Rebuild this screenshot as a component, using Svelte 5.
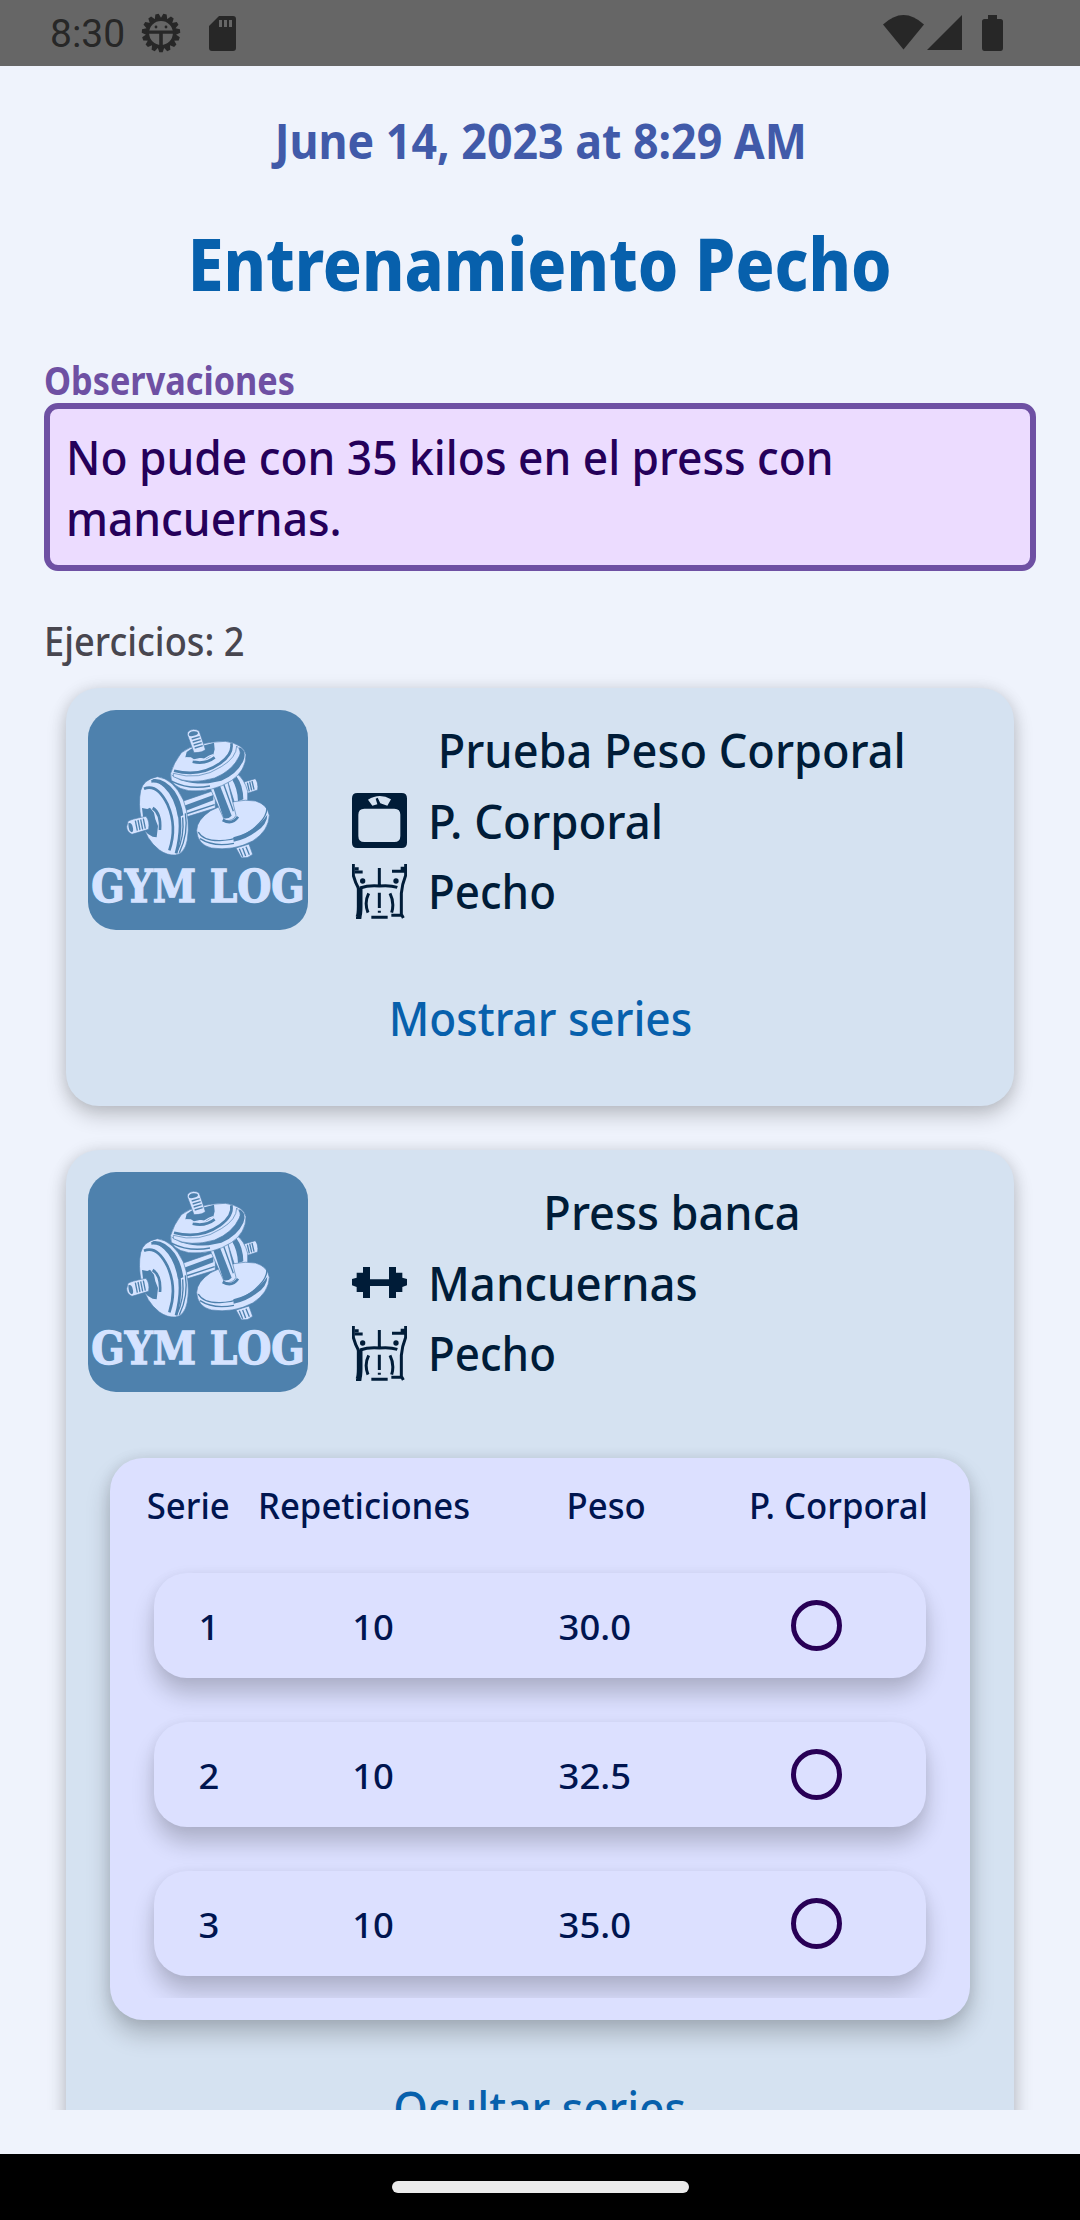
<script>
  const exercises = [
    { name: 'Prueba Peso Corporal', gear: 'P. Corporal', icon: 'scale', muscle: 'Pecho', action: 'Mostrar series', sets: [] },
    {
      name: 'Press banca',
      gear: 'Mancuernas',
      icon: 'dumbbell',
      muscle: 'Pecho',
      action: 'Ocultar series',
      sets: [
        { n: 1, reps: 10, weight: '30.0' },
        { n: 2, reps: 10, weight: '32.5' },
        { n: 3, reps: 10, weight: '35.0' }
      ]
    }
  ];
  const teeth = Array.from({ length: 15 }, (_, i) => 90 + i * 24);
</script>

{#snippet logo()}
  <svg class="logo" viewBox="0 0 660 660">
    <g transform="translate(96 30)">
      <!-- back dumbbell: bar and far end -->
      <path class="l" d="M372 186l34-10q10 12 7 34l-34 11z" />
      <path class="d thin" d="M382 188l6 26M389 185l6 26M396 183l6 26" />
      <path class="l" d="M322 180L350 160Q374 178 383 214V242L344 250Z" />
      <path class="df" d="M336 178l14-8q19 24 20 68l-16 6q-1-38-18-66z" />
      <path class="l" d="M184 245L286 210V264L196 292Z" />
      <path class="df" d="M192 257L280 225V241L198 272Z" />
      <path class="d thin" d="M198 282L284 254" />
      <!-- left plates -->
      <path class="l" d="M62 212Q70 178 112 170Q160 176 190 240Q212 300 202 360Q194 402 166 405Q142 407 118 390Q78 360 64 300Q54 250 62 212Z" />
      <path class="d" d="M72 206Q112 190 143 254Q172 320 148 391M94 184Q140 180 168 244Q192 312 168 400" />
      <path class="df" d="M96 178Q132 172 164 214Q184 244 190 286L174 292Q164 232 132 202Q114 186 96 178Z" />
      <path class="d thin" d="M196 280Q206 340 178 398M188 292Q194 350 170 398" />
      <path class="d" d="M98 264Q124 280 120 330" />
      <path class="df" d="M66 264l16 3 8-4 12 15 4 20 8 20-4 34-12-2-14-8-10-10z" />
      <path class="l" d="M24 304Q30 298 78 289Q90 304 86 328L36 343Q20 336 20 320Z" />
      <path class="df" d="M25 310q9-5 13 10t-3 17q-10-3-10-27z" />
      <path class="d thin" d="M46 302l6 30M54 300l6 30M62 298l6 30M70 296l6 30" />
      <!-- lower right plates and front bar -->
      <path class="l" d="M348 384l39-12 11 31q-14 14-34 10z" />
      <path class="d thin" d="M358 386l10 24M368 384l9 24M378 380l10 24" />
      <path class="l" d="M230 331Q230 300 272 272Q348 232 407 243Q443 254 448 286Q446 333 398 363Q340 394 274 384Q232 374 230 331Z" />
      <path class="d thin" d="M235 336Q249 363 300 362Q370 360 418 310Q440 288 441 264" />
      <path class="df" d="M340 352Q408 334 442 284Q442 312 410 334Q376 360 341 365Z" />
      <path class="d thin" d="M240 356Q280 382 342 370" />
      <path class="l" d="M270 204L322 180L348 286Q340 304 314 302Z" />
      <path class="df" d="M280 205l20-8 35 90q-8 10-24 8z" />
      <path class="d thin" d="M310 190L340 274" />
      <path class="d" d="M308 300Q336 316 354 290" />
      <!-- top plates -->
      <path class="l" d="M152 160Q160 130 184 98Q226 66 316 64Q370 72 378 104Q378 152 334 182Q278 218 206 212Q148 202 152 160Z" />
      <path class="d" d="M162 152Q240 172 300 130Q340 102 334 70" />
      <path class="df" d="M154 164Q240 196 310 148Q356 116 358 82Q382 92 370 122Q352 162 304 182L266 190Q188 194 154 164Z" />
      <path class="l" d="M160 160Q238 184 304 140Q350 112 350 78Q366 92 358 108Q338 152 284 174Q210 196 160 170Z" />
      <path class="d thin" d="M156 184Q208 210 270 198" />
      <path class="d" d="M218 125Q256 134 284 112" />
      <path class="df" d="M196 112l4-16 14-10 68-18 2 20-4 16-22 14-16-4-20 8-8-8z" />
      <path class="d thin wave" d="M198 114l14 0 10 6 18-4 12 2 16-10 12-4" />
      <path class="l" d="M202 44Q200 32 220 28Q238 28 240 40L256 88Q250 98 222 98Z" />
      <path class="df" d="M206 44q2-9 14-10 14-1 14 6-2 6-16 8-10 2-12-4z" />
      <path class="d thin" d="M215 57l24-7M218 66l24-7M221 75l24-7M224 84l24-7" />
    </g>
    <text x="10" y="577" textLength="640" lengthAdjust="spacingAndGlyphs">GYM LOG</text>
  </svg>
{/snippet}

{#snippet gearIcon(kind)}
  {#if kind === 'scale'}
    <svg class="ico" viewBox="0 0 165 165">
      <path fill-rule="evenodd" d="M16 0H149Q165 0 165 16V149Q165 165 149 165H16Q0 165 0 149V16Q0 0 16 0ZM37 47Q19 47 19 65V129Q19 147 37 147H127Q145 147 145 129V65Q145 47 127 47ZM48 20L61 38L76 34L71 17L77 14L85 31L106 38L117 19Q83-2 48 20Z" />
    </svg>
  {:else}
    <svg class="ico" viewBox="0 0 165 165">
      <path d="M0 72l14-4V53H33V36H54V73H111V36H132V53H151V68l14 4V91l-14 5V111H132V129H111V93H54V129H33V111H14V96L0 91Z" />
    </svg>
  {/if}
{/snippet}

{#snippet torso()}
  <svg class="ico line" viewBox="0 0 165 165">
    <path d="M4 0V34Q10 56 20 74" />
    <path class="w" d="M23 72V128Q23 150 19 160" />
    <path d="M161 0V34Q150 62 148 88V155M8 14H20M8 24H32M120 22H160M146 13H160M82 12V66M24 72Q50 63 82 66Q114 63 136 70M50 88Q36 116 48 146M114 88Q128 116 119 146M82 86V132M82 140V146M58 160H107M118 154H150L154 162M12 162H28" />
    <circle cx="32" cy="51" r="8" /><circle cx="132" cy="51" r="8" />
  </svg>
{/snippet}

<div class="screen">
  <header class="status">
    <span class="clock">8:30</span>
    <svg class="gear" width="40" height="40" viewBox="-20 -20 40 40">
      {#each teeth as a}
        <path d="M13 -3.8L19.2 -1.7V1.7L13 3.8Z" transform="rotate({a})" />
      {/each}
      <circle r="13.4" class="ring" />
      <path d="M-13 -2.4H13V.8H1.8V14H-1.8V.8H-13Z" />
      <circle cx="-5" cy="-6" r="1.4" /><circle cx="5" cy="-6" r="1.4" />
    </svg>
    <svg class="sd" width="27" height="35" viewBox="0 0 27 35">
      <path fill-rule="evenodd" d="M10 0H24Q27 0 27 3V32Q27 35 24 35H3Q0 35 0 32V10ZM10 4V11H13V4ZM15 4V11H18V4ZM20 4V11H23V4Z" />
    </svg>
    <svg class="wifi" width="41" height="35" viewBox="0 0 41 35"><path d="M0 9.5Q20.500-9.500 41 9.500L20.500 34.500Z" /></svg>
    <svg class="cell" width="35" height="35" viewBox="0 0 35 35"><path d="M35 0V35H0Z" /></svg>
    <svg class="battery" width="21" height="36" viewBox="0 0 21 36"><path d="M6 0H15V4H18.500Q21 4 21 6.500V33Q21 36 18.500 36H2.500Q0 36 0 33V6.500Q0 4 2.500 4H6Z" /></svg>
  </header>

  <main>
    <p class="date"><span>June 14, 2023 at 8:29 AM</span></p>
    <h1><span>Entrenamiento Pecho</span></h1>
    <h2><span>Observaciones</span></h2>
    <div class="note"><span>No pude con 35 kilos en el press con<br />mancuernas.</span></div>
    <p class="count"><span>Ejercicios: 2</span></p>

    <section class="list">
      {#each exercises as ex}
        <article class="card">
          <div class="head">
            {@render logo()}
            <div class="info">
              <div class="name"><span>{ex.name}</span></div>
              <div class="row">{@render gearIcon(ex.icon)}<span>{ex.gear}</span></div>
              <div class="row">{@render torso()}<span class="muscle">{ex.muscle}</span></div>
            </div>
          </div>
          {#if ex.sets.length}
            <div class="panel">
              <div class="cols">
                <span>Serie</span><span>Repeticiones</span><span>Peso</span><span>P. Corporal</span>
              </div>
              <div class="sets">
                {#each ex.sets as s}
                  <div class="set">
                    <span>{s.n}</span><span>{s.reps}</span><span>{s.weight}</span><i class="radio"></i>
                  </div>
                {/each}
              </div>
            </div>
          {/if}
          <div class="action"><span>{ex.action}</span></div>
        </article>
      {/each}
    </section>
  </main>

  <footer class="nav"><div class="pill"></div></footer>
</div>

<style>
  :global(body) { margin: 0; }
  .screen {
    width: 1080px; height: 2220px; overflow: hidden;
    display: flex; flex-direction: column;
    background: #eff3fc;
    font-family: 'Noto Sans', 'Open Sans', sans-serif; font-weight: 500;
  }
  p, h1, h2 { margin: 0; }
  span { display: inline-block; white-space: nowrap; }

  .status {
    height: 66px; flex: none; box-sizing: border-box; padding: 0 77px 0 50px;
    display: flex; align-items: flex-start; background: #666; color: #272727; fill: #272727;
  }
  .clock { width: 91px; font: 400 39px/66px Roboto, sans-serif; padding-top: 1px; }
  .gear { margin-top: 13px; }
  .ring { fill: none; stroke: #272727; stroke-width: 3; }
  .sd { margin: 16px 0 0 28px; }
  .wifi { margin: 15px 3px 0 auto; }
  .cell { margin: 15px 20px 0 0; }
  .battery { margin-top: 15px; }

  main { flex: 1; min-height: 0; padding: 44px 44px; box-sizing: border-box; display: flex; flex-direction: column; }
  .date { font-size: 49px; line-height: 60px; font-weight: 700; color: #415aa9; text-align: center; }
  .date span { transform: translateX(1px) scaleX(.912); }
  h1 { margin-top: 44px; font-size: 73px; line-height: 98px; font-weight: 800; color: #0760ac; text-align: center; }
  h1 span { margin: 0 -60px; transform: scaleX(.883); }
  h2 { margin-top: 45px; font-size: 39px; line-height: 46px; font-weight: 700; color: #6e50a3; }
  h2 span, .note span, .count span, .row span { transform-origin: left; }
  h2 span { transform: scaleX(.878); }
  .note {
    height: 168px; flex: none; box-sizing: border-box; padding: 18px 16px; border: 6px solid #6e50a3; border-radius: 14px;
    background: #ecdcff; color: #25005a; font-size: 47px; line-height: 61px;
  }
  .note span { transform: scaleX(.943); }
  .count { margin-top: 45px; font-size: 39px; line-height: 50px; color: #48464f; }
  .count span { transform: scaleX(.93); }

  .list {
    height: 1444px; flex: none; box-sizing: border-box; padding: 22px; overflow: hidden;
    display: flex; flex-direction: column; gap: 44px;
  }
  .card {
    flex: none; box-sizing: border-box; padding: 22px 22px 53px; border-radius: 33px;
    background: #d5e2f1; color: #001c38; font-size: 47px;
    box-shadow: 0 10px 20px rgba(0, 0, 0, .19), 0 0 16px rgba(0, 0, 0, .1);
  }
  .head { display: flex; gap: 44px; height: 220px; }
  .logo { width: 220px; height: 220px; flex: none; border-radius: 28px; background: #4e81ad; }
  .logo text { font: 700 135px 'DejaVu Serif', serif; fill: #d5e3ff; stroke: #d5e3ff; stroke-width: 4; }
  .l { fill: #d5e3ff; stroke: #4e81ad; stroke-width: 2; }
  .df { fill: #4e81ad; }
  .d { fill: none; stroke: #4e81ad; stroke-width: 8; }
  .thin { stroke-width: 4; }
  .wave { stroke: #d5e3ff; }
  .info { flex: 1; padding-top: 5px; line-height: 70px; }
  .name { height: 70.5px; text-align: center; }
  .name span { transform: scaleX(.96); }
  .row { height: 70.5px; display: flex; align-items: center; gap: 21px; }
  .row span { transform: scaleX(.97); }
  .row .muscle { transform: scaleX(.935); }
  .ico { width: 55px; height: 55px; fill: #001c38; }
  .line path { fill: none; stroke: #001c38; stroke-width: 9; stroke-linejoin: round; }
  .line path.w { stroke-width: 17; }
  .action { margin-top: 53px; line-height: 70px; text-align: center; color: #0760ac; }
  .action span { transform: scaleX(.94); }

  .panel {
    margin: 66px 22px 0; padding: 22px; border-radius: 33px; background: #dce0ff; color: #001550;
    box-shadow: 0 14px 24px rgba(0, 0, 0, .22), 0 0 14px rgba(0, 0, 0, .09);
  }
  .cols, .set { display: grid; justify-items: center; }
  .cols { grid-template-columns: 112px 240px 245px 219px; font-size: 37px; line-height: 50px; }
  .cols span { transform: scaleX(.938); }
  .sets { padding: 43px 22px 22px; overflow: hidden; display: flex; flex-direction: column; gap: 44px; }
  .set {
    height: 105px; grid-template-columns: 110px 219px 224px 218px; align-items: center;
    border-radius: 33px; background: #dce0ff; font-size: 35px; line-height: 50px;
    box-shadow: 0 16px 22px rgba(0, 0, 0, .2), 0 0 12px rgba(0, 0, 0, .05);
  }
  .set span { padding-top: 2px; transform: scaleX(1.04); }
  .radio { width: 41px; height: 41px; border: 5px solid #280056; border-radius: 50%; }

  .nav { height: 66px; flex: none; background: #000; display: flex; justify-content: center; align-items: center; }
  .pill { width: 297px; height: 12px; border-radius: 6px; background: #ebebeb; }
</style>
